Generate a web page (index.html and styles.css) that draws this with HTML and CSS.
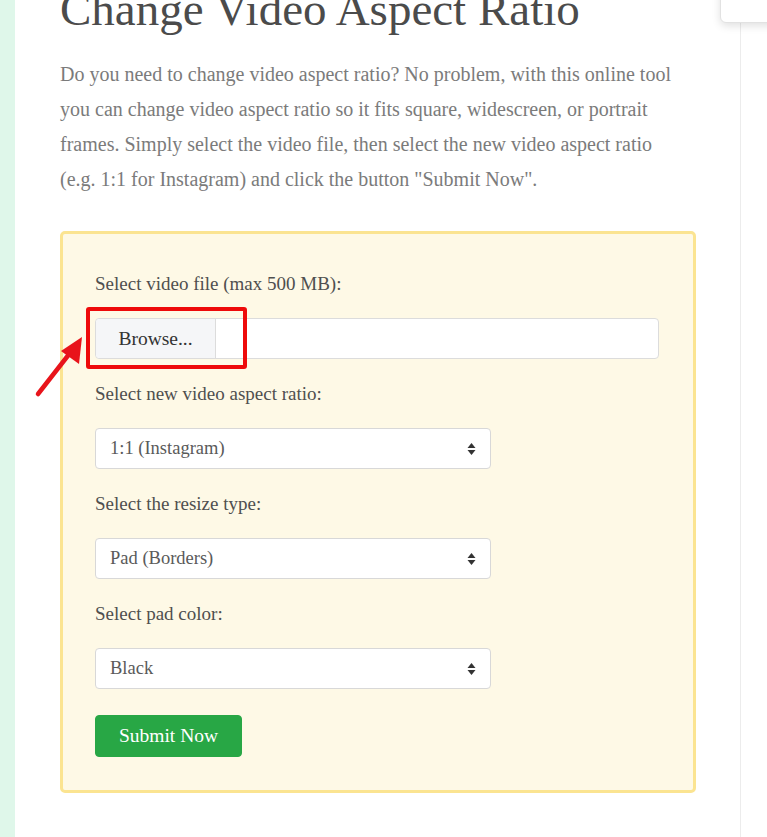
FILE: index.html
```html
<!DOCTYPE html>
<html lang="en">
<head>
<meta charset="utf-8">
<title>Change Video Aspect Ratio</title>
<link rel="stylesheet" href="styles.css">
</head>
<body>
<div class="page">
  <div class="strip"></div>
  <main class="main">
    <h1 class="title">Change Video Aspect Ratio</h1>
    <p class="intro">Do you need to change video aspect ratio? No problem, with this online tool you can change video aspect ratio so it fits square, widescreen, or portrait frames. Simply select the video file, then select the new video aspect ratio (e.g. 1:1 for Instagram) and click the button "Submit Now".</p>
    <form class="tool">
      <div class="group">
        <label class="label">Select video file (max 500 MB):</label>
        <div class="file">
          <span class="browse">Browse...</span>
          <span class="filename"></span>
          <span class="highlight"></span>
          <svg class="arrow" width="60" height="80" viewBox="0 0 60 80">
            <line x1="8" y1="75" x2="40" y2="34" stroke="#e8141b" stroke-width="4.5" stroke-linecap="round"/>
            <polygon points="52,18 49,45 31,32" fill="#e8141b"/>
          </svg>
        </div>
      </div>
      <div class="group">
        <label class="label">Select new video aspect ratio:</label>
        <div class="select"><span>1:1 (Instagram)</span>
          <svg class="caret" width="9" height="14" viewBox="0 0 9 14"><polygon points="4.5,1 8.5,6 0.5,6" fill="#333"/><polygon points="4.5,13 8.5,8 0.5,8" fill="#333"/></svg>
        </div>
      </div>
      <div class="group">
        <label class="label">Select the resize type:</label>
        <div class="select"><span>Pad (Borders)</span>
          <svg class="caret" width="9" height="14" viewBox="0 0 9 14"><polygon points="4.5,1 8.5,6 0.5,6" fill="#333"/><polygon points="4.5,13 8.5,8 0.5,8" fill="#333"/></svg>
        </div>
      </div>
      <div class="group">
        <label class="label">Select pad color:</label>
        <div class="select"><span>Black</span>
          <svg class="caret" width="9" height="14" viewBox="0 0 9 14"><polygon points="4.5,1 8.5,6 0.5,6" fill="#333"/><polygon points="4.5,13 8.5,8 0.5,8" fill="#333"/></svg>
        </div>
      </div>
      <div class="actions">
        <button type="button" class="submit">Submit Now</button>
      </div>
    </form>
  </main>
  <div class="aside"></div>
  <div class="corner-card"></div>
</div>
</body>
</html>
```
FILE: styles.css
```css
* { box-sizing: border-box; }
html, body { margin: 0; padding: 0; background: #fff; }
body {
  font-family: "Liberation Serif", "DejaVu Serif", serif;
  color: #4a4a4a;
  overflow: hidden;
}
.page {
  position: relative;
  display: flex;
  width: 767px;
  height: 837px;
  overflow: hidden;
}
.strip {
  width: 15px;
  flex: none;
  background: #dff7ea;
}
.main {
  width: 726px;
  flex: none;
  padding-left: 45px;
  border-right: 1px solid #ececec;
}
.aside { flex: 1; }
.corner-card {
  position: absolute;
  right: -10px;
  top: -20px;
  width: 57px;
  height: 43px;
  background: #fff;
  border: 1px solid #e2e2e2;
  border-radius: 6px;
  box-shadow: 0 3px 8px rgba(0,0,0,0.12);
}
.title {
  margin: -19px 0 0 0;
  font-size: 47px;
  line-height: 1.2;
  font-weight: 400;
  color: #4b4b4b;
  white-space: nowrap;
}
.intro {
  margin: 20px 0 0 0;
  width: 622px;
  font-size: 20px;
  line-height: 35px;
  color: #7b7b7b;
}
.tool {
  margin: 34px 0 0 0;
  width: 636px;
  height: 562px;
  background: #fef9e6;
  border: 3px solid #fbe491;
  border-radius: 5px;
  padding: 36px 34px 33px 32px;
  display: flex;
  flex-direction: column;
  gap: 21px;
}
.group {
  display: flex;
  flex-direction: column;
  gap: 21px;
}
.label {
  font-size: 19px;
  line-height: 27px;
  color: #4f4f4f;
}
.file {
  position: relative;
  display: flex;
  height: 41px;
  background: #fff;
  border: 1px solid #dcdcdc;
  border-radius: 4px;
}
.browse {
  width: 120px;
  display: flex;
  align-items: center;
  justify-content: center;
  background: #f5f6f8;
  border-right: 1px solid #dcdcdc;
  border-radius: 4px 0 0 4px;
  font-size: 19.5px;
  color: #333;
}
.filename { flex: 1; }
.highlight {
  position: absolute;
  left: -10px;
  top: -12px;
  width: 161px;
  height: 62px;
  border: 4px solid #ee0a0a;
  border-radius: 3px;
}
.arrow {
  position: absolute;
  left: -66px;
  top: 0px;
}
.select {
  position: relative;
  width: 396px;
  height: 41px;
  background: #fff;
  border: 1px solid #d8d8d8;
  border-radius: 4px;
  display: flex;
  align-items: center;
  justify-content: space-between;
  padding: 0 14px 0 14px;
  font-size: 18.5px;
  color: #5a5a5a;
}
.caret { display: block; }
.actions { padding-top: 5px; }
.submit {
  height: 42px;
  width: 147px;
  background: #28a745;
  border: 1px solid #28a745;
  border-radius: 4px;
  color: #fff;
  font-family: "Liberation Serif", "DejaVu Serif", serif;
  font-size: 19.5px;
  padding: 0;
}
```
